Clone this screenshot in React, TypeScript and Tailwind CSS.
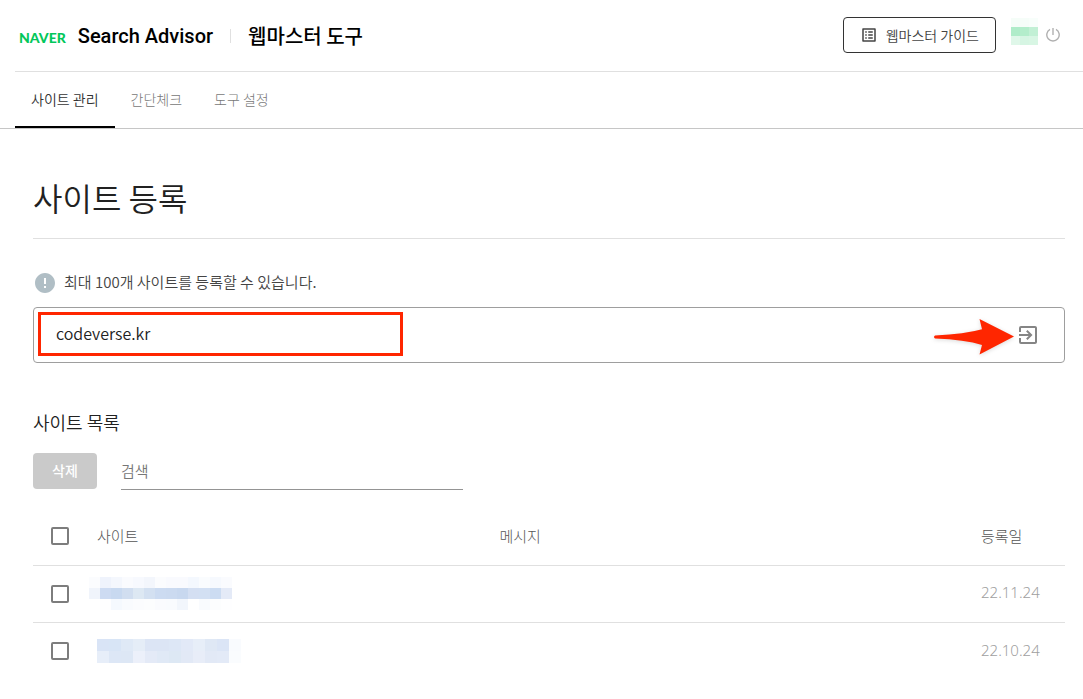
import { MdError, MdExitToApp, MdOutlineListAlt } from "react-icons/md";

const tabs = [
  { name: "사이트 관리", href: "#manage", active: true },
  { name: "간단체크", href: "#check", active: false },
  { name: "도구 설정", href: "#settings", active: false },
];

const sites = [
  {
    id: 1,
    date: "22.11.24",
    cell: 11,
    pixels: [
      ["#fbfcfe", "#eff3fc", "#f4f7fd", "#fafbfe", "#f7f9fe", "#f3f6fc", "#fbfcfe", "#f9fafe", "#f9fafe", "#f4f8fe", "#fafcfe", "#f6f9fe", "#fafbfe"],
      ["#f0f4fb", "#cddbf2", "#c8d9f0", "#d1def0", "#dde8f3", "#d3e0f1", "#ccdbf1", "#cbdaf0", "#c8d8ef", "#d4dff2", "#d3e0f3", "#ccdcf2", "#e4eaf7"],
      ["#ffffff", "#fefeff", "#f5f9fe", "#f9fbfe", "#fbfcfe", "#fcfdfe", "#fafbfe", "#f9fbfe", "#f2f6fc", "#ffffff", "#f9fbfe", "#fcfdfe", "#fefeff"],
    ],
  },
  {
    id: 2,
    date: "22.10.24",
    cell: 12,
    pixels: [
      ["#d9e4f6", "#d8e5f6", "#dfe9f6", "#e5edf7", "#dce5f5", "#dce5f5", "#dde7f6", "#e2e9f7", "#e7eef8", "#dfe8f5", "#dbe5f6", "#f9fbfe"],
      ["#e7eef9", "#dde7f6", "#dde7f5", "#ecf0fa", "#e4eaf7", "#e0e9f6", "#dde8f4", "#e2e9f6", "#e8edf8", "#e2e9f6", "#e3eaf7", "#fafcfe"],
    ],
  },
];

const userPixels = [
  ["#f5fdf8", "#f6fdf9", "#f8fefb"],
  ["#afecc9", "#b3edcb", "#c2f0d5"],
  ["#dff7e9", "#d6f5e3", "#d8f6e4"],
];

const checkbox =
  "block size-[18px] appearance-none rounded-xs border-2 border-[#7d7d7d] bg-white checked:bg-[#7d7d7d]";

function Mosaic({ pixels, cell }: { pixels: string[][]; cell: number }) {
  return (
    <svg
      width={pixels[0].length * cell}
      height={pixels.length * cell}
      shapeRendering="crispEdges"
      aria-hidden="true"
    >
      {pixels.map((row, y) =>
        row.map((color, x) => (
          <rect
            key={`${x}-${y}`}
            x={x * cell}
            y={y * cell}
            width={cell}
            height={cell}
            fill={color}
          />
        ))
      )}
    </svg>
  );
}

function Header() {
  return (
    <header className="ml-[15px] flex h-18 items-center justify-between border-b border-[#e0e0e0] pr-[23px] pl-1">
      <div className="flex items-center text-xl leading-6 font-medium text-black">
        <a href="#naver" className="pt-1 font-['Lato_Black','Lato',sans-serif] text-sm leading-4 font-black text-[#03c75a]">
          NAVER
        </a>
        <a href="#home" className="ml-3 font-['Roboto',sans-serif]">
          Search Advisor
        </a>
        <span className="mx-[17px] h-3.5 w-px bg-[#e0e0e0]" />
        <a href="#tools">웹마스터 도구</a>
      </div>
      <div className="flex items-center pb-0.5">
        <a
          href="#guide"
          className="mr-[15px] flex h-9 items-center gap-2 rounded border border-[#333] px-4 text-sm text-[#444]"
        >
          <MdOutlineListAlt className="size-[18px]" />
          웹마스터 가이드
        </a>
        <div className="pb-1.5">
          <Mosaic pixels={userPixels} cell={9} />
        </div>
        <button type="button" aria-label="로그아웃" className="ml-2">
          <svg width="14" height="14" viewBox="0 0 14 14" fill="none" stroke="#b0b0b0" strokeWidth="1.4">
            <path d="M4 1.4a6.2 6.2 0 1 0 6 0" />
            <path d="M7 0v7" />
          </svg>
        </button>
      </div>
    </header>
  );
}

export default function App() {
  return (
    <div className="min-h-screen bg-white font-['Noto_Sans_CJK_KR','Noto_Sans',sans-serif] font-[350] text-[#212121]">
      <Header />
      <nav className="flex h-[57px] border-b border-[#c6c6c6] pl-[15px]">
        {tabs.map((tab) => (
          <a
            key={tab.name}
            href={tab.href}
            className={
              tab.active
                ? "flex items-center border-b-2 border-black px-4 text-sm text-[#333]"
                : "flex items-center border-b-2 border-transparent px-4 text-sm font-light text-[#777]"
            }
          >
            {tab.name}
          </a>
        ))}
      </nav>

      <main className="pr-[18px] pl-[33px]">
        {/* Register */}
        <section>
          <h1 className="border-b border-[#e0e0e0] pt-12 pb-[21px] text-[32px] leading-10 font-[350]">
            사이트 등록
          </h1>
          <div className="mt-8 flex items-center gap-[7px] text-[15px] text-[#444]">
            <MdError className="size-6 text-[#b0bec5]" />
            <label htmlFor="site" className="pb-0.5 leading-5.5">
              최대 100개 사이트를 등록할 수 있습니다.
            </label>
          </div>
          <div className="relative mt-3 flex h-14 items-center rounded border border-[#9e9e9e] pr-6 pl-[22px]">
            <input
              id="site"
              type="text"
              defaultValue="codeverse.kr"
              className="min-w-0 flex-1 bg-transparent pb-1 text-base outline-none"
            />
            <button type="button" aria-label="등록" className="text-[#858585]">
              <MdExitToApp className="size-6" />
            </button>
            {/* Highlight box and arrow */}
            <div className="pointer-events-none absolute top-1 left-1 h-11 w-[365px] border-3 border-[#ff2600]" />
            <svg
              className="pointer-events-none absolute top-2 right-[49px] drop-shadow-sm"
              width="82"
              height="40"
              viewBox="0 0 82 40"
              fill="#ff2600"
            >
              <path d="M2 19.5Q32 18 49 13.2L46.5 3L81 20.5L46.5 38.5L49 29Q32 23.5 2 22.5Q0 21 2 19.5Z" />
            </svg>
          </div>
        </section>

        {/* List */}
        <section className="pt-[47px]">
          <h2 className="text-lg leading-6 font-[350]">사이트 목록</h2>
          <div className="mt-[19px] flex items-start gap-6">
            <button
              type="button"
              disabled
              className="h-9 w-16 rounded bg-[#cacaca] pb-0.5 text-sm font-medium text-white"
            >
              삭제
            </button>
            <input
              type="search"
              aria-label="검색"
              placeholder="검색"
              className="h-[37px] w-[342px] border-b border-[#949494] pb-0.5 text-[15px] outline-none placeholder:text-[#777]"
            />
          </div>
          <table className="mt-[18px] w-full table-fixed text-left text-[15px] font-light">
            <thead>
              <tr className="h-[57px] border-b border-[#e0e0e0] text-[#555]">
                <th className="w-16 pl-[18px]">
                  <input type="checkbox" aria-label="전체 선택" className={checkbox} />
                </th>
                <th className="w-[39%] font-light">사이트</th>
                <th className="font-light">메시지</th>
                <th className="w-21 font-light">등록일</th>
              </tr>
            </thead>
            <tbody>
              {sites.map((site) => (
                <tr key={site.id} className="h-[57px] border-b border-[#e0e0e0] last:border-b-0">
                  <td className="pl-[18px]">
                    <input type="checkbox" aria-label={`사이트 ${site.id} 선택`} className={checkbox} />
                  </td>
                  <td>
                    <div className={site.cell === 11 ? "-ml-2" : ""}>
                      <Mosaic pixels={site.pixels} cell={site.cell} />
                    </div>
                  </td>
                  <td />
                  <td className="pb-0.5 font-['Noto_Sans',sans-serif] text-[#a0a0a0]">{site.date}</td>
                </tr>
              ))}
            </tbody>
          </table>
        </section>
      </main>
    </div>
  );
}
